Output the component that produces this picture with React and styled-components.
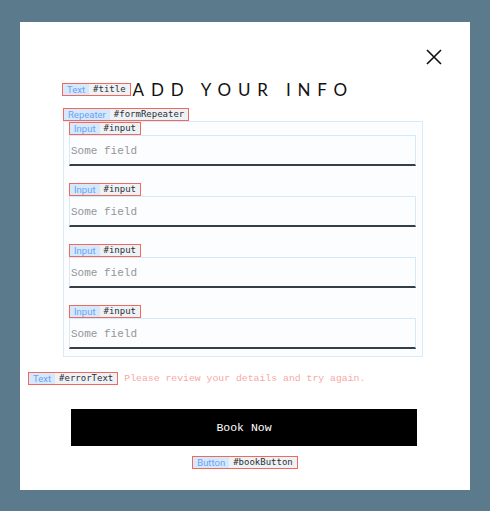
import React from 'react';
import styled, { createGlobalStyle } from 'styled-components';

const GlobalStyle = createGlobalStyle`
  html, body {
    margin: 0;
    padding: 0;
    background: #5b7a8b;
  }
`;

const Page = styled.div`
  width: 490px;
  height: 511px;
  padding: 22px 20px 0;
  box-sizing: border-box;
`;

const Modal = styled.section`
  position: relative;
  width: 450px;
  height: 468px;
  background: #ffffff;
  display: flex;
  flex-direction: column;
  box-sizing: border-box;
  padding-top: 61px;
`;

const CloseButton = styled.button`
  position: absolute;
  top: 27px;
  right: 28px;
  width: 16px;
  height: 16px;
  padding: 0;
  border: none;
  background: none;
  display: flex;
`;

const TagBox = styled.span`
  display: inline-flex;
  align-items: stretch;
  height: 13px;
  border: 1px solid #f2685c;
  box-sizing: border-box;
  line-height: 11px;
  white-space: nowrap;
  flex-shrink: 0;
`;

const TagType = styled.span`
  background: #d6e9fc;
  color: #6aa3f2;
  font-family: Roboto, 'Liberation Sans', sans-serif;
  font-size: 9.5px;
  padding: 0 4px;
`;

const TagId = styled.span`
  background: #eff2f5;
  color: #2a2f36;
  font-family: 'DejaVu Sans Mono', monospace;
  font-size: 9px;
  padding: 0 4px;
`;

const Tag = ({ type, id }) => (
  <TagBox>
    <TagType>{type}</TagType>
    <TagId>{id}</TagId>
  </TagBox>
);

const TitleRow = styled.div`
  display: flex;
  align-items: center;
  gap: 2px;
  margin-left: 42px;
  height: 13px;
`;

const Title = styled.h1`
  margin: 0;
  font-family: Lato, 'Open Sans', sans-serif;
  font-weight: 400;
  font-size: 17px;
  line-height: 13px;
  letter-spacing: 6.8px;
  color: #111;
`;

const RepeaterBlock = styled.div`
  margin: 12px 0 0 43px;
  display: flex;
  flex-direction: column;
  align-items: flex-start;
`;

const RepeaterBox = styled.div`
  width: 360px;
  box-sizing: border-box;
  border: 1px solid #d9ebf8;
  background: #fcfdff;
  padding: 0 6px 7px 5px;
  display: flex;
  flex-direction: column;
  gap: 17px;
`;

const Field = styled.div`
  display: flex;
  flex-direction: column;
  align-items: flex-start;
`;

const Input = styled.input`
  width: 347px;
  height: 31px;
  box-sizing: border-box;
  border: 1px solid #d6e9f7;
  border-bottom: 2px solid #343f4a;
  background: #fbfdff;
  padding: 1px 0 0 1px;
  font-family: 'Liberation Mono', monospace;
  font-size: 11px;
  outline: none;
  &::placeholder {
    color: #959595;
  }
`;

const ErrorRow = styled.div`
  display: flex;
  align-items: center;
  gap: 6px;
  height: 13px;
  margin: 15px 0 0 8px;
`;

const ErrorText = styled.p`
  margin: 0;
  font-family: 'Liberation Mono', monospace;
  font-size: 9.8px;
  line-height: 13px;
  color: #f8a8a8;
`;

const ButtonBlock = styled.div`
  display: flex;
  flex-direction: column;
  align-items: center;
  margin-top: 24px;
  gap: 10px;
`;

const BookButton = styled.button`
  width: 346px;
  height: 37px;
  margin-left: -2px;
  border: none;
  background: #000;
  color: #fff;
  font-family: 'Liberation Mono', monospace;
  font-weight: 400;
  font-size: 11.5px;
  cursor: pointer;
`;

const fields = [1, 2, 3, 4];

export default function App() {
  return (
    <>
      <GlobalStyle />
      <Page>
        <Modal>
          <CloseButton aria-label="Close">
            <svg width="16" height="16" viewBox="0 0 16 16">
              <path d="M1 1L15 15M15 1L1 15" stroke="#111" strokeWidth="1.6" />
            </svg>
          </CloseButton>
          <TitleRow>
            <Tag type="Text" id="#title" />
            <Title>ADD YOUR INFO</Title>
          </TitleRow>
          <RepeaterBlock>
            <Tag type="Repeater" id="#formRepeater" />
            <RepeaterBox>
              {fields.map((f) => (
                <Field key={f}>
                  <Tag type="Input" id="#input" />
                  <Input placeholder="Some field" />
                </Field>
              ))}
            </RepeaterBox>
          </RepeaterBlock>
          <ErrorRow>
            <Tag type="Text" id="#errorText" />
            <ErrorText>Please review your details and try again.</ErrorText>
          </ErrorRow>
          <ButtonBlock>
            <BookButton>Book Now</BookButton>
            <Tag type="Button" id="#bookButton" />
          </ButtonBlock>
        </Modal>
      </Page>
    </>
  );
}
